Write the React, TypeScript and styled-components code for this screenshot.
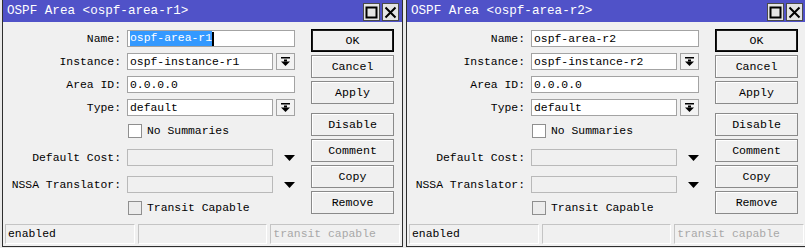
import styled, { createGlobalStyle } from 'styled-components'

const GlobalStyle = createGlobalStyle`
  html, body {
    margin: 0;
    padding: 0;
    background: #e9e9e9;
    overflow: hidden;
  }
  body {
    font-family: "Liberation Mono", "DejaVu Sans Mono", monospace;
  }
`

const Desktop = styled.div`
  display: flex;
  gap: 3px;
  padding-left: 2px;
  width: 820px;
  height: 248px;
`

const Window = styled.div`
  width: 401px;
  height: 247px;
  box-sizing: border-box;
  border: 1px solid #2e2e2e;
  border-top: none;
  background: #f0f0f0;
  display: flex;
  flex-direction: column;
  flex-shrink: 0;
`

const TitleBar = styled.div`
  height: 22px;
  background: #5052c8;
  display: flex;
  align-items: center;
  padding: 0 3px 0 4px;
`

const Title = styled.div`
  flex: 1;
  color: #ffffff;
  font-size: 12.6px;
  white-space: nowrap;
`

const TitleButtons = styled.div`
  display: flex;
  gap: 2px;
  margin-top: 2px;
`

const TitleButton = styled.div`
  width: 17px;
  height: 18px;
  box-sizing: border-box;
  background: #e4e4e4;
  border: 1px solid #4a4a4a;
  display: flex;
  align-items: center;
  justify-content: center;
`

const Main = styled.div`
  display: flex;
  padding-top: 5px;
`

const Form = styled.div`
  width: 308px;
  display: flex;
  flex-direction: column;
`

const Row = styled.div<{ $gap?: number }>`
  display: grid;
  grid-template-columns: 118px 1fr;
  column-gap: 6px;
  align-items: center;
  height: 23px;
  margin-top: ${p => p.$gap || 0}px;
  font-size: 11.4px;
  color: #000;
`

const Label = styled.div`
  text-align: right;
  white-space: nowrap;
`

const FieldLine = styled.div`
  display: flex;
  align-items: center;
  gap: 3px;
`

const Field = styled.div<{ $w: number; $disabled?: boolean }>`
  width: ${p => p.$w}px;
  height: 17px;
  box-sizing: border-box;
  border: 1px solid ${p => (p.$disabled ? '#b9b9b9' : '#a3a3a3')};
  background: ${p => (p.$disabled ? '#f0f0f0' : '#ffffff')};
  display: flex;
  align-items: center;
  padding-left: 2px;
  white-space: nowrap;
  overflow: hidden;
`

const Selected = styled.span`
  background: #3399ff;
  color: #fff;
  line-height: 15px;
`

const Caret = styled.span`
  display: inline-block;
  width: 2px;
  height: 14px;
  background: #000;
`

const DropButton = styled.div`
  width: 19px;
  height: 17px;
  box-sizing: border-box;
  border: 1px solid #a3a3a3;
  background: #f3f3f3;
  display: flex;
  align-items: center;
  justify-content: center;
`

const ArrowSlot = styled.div`
  width: 19px;
  display: flex;
  justify-content: center;
  margin-left: 4px;
`

const CheckLine = styled.div`
  grid-column: 2;
  display: flex;
  align-items: center;
  gap: 5px;
  padding-left: 1px;
`

const CheckBox = styled.div<{ $disabled?: boolean }>`
  width: 14px;
  height: 14px;
  box-sizing: border-box;
  border: 1px solid #8f8f8f;
  background: ${p => (p.$disabled ? '#ececec' : '#ffffff')};
`

const Buttons = styled.div`
  display: flex;
  flex-direction: column;
  gap: 3px;
  padding-top: 2px;
  width: 83px;
`

const Button = styled.div<{ $default?: boolean; $gap?: number }>`
  height: 23px;
  box-sizing: border-box;
  border: 1px solid ${p => (p.$default ? '#000' : '#8a8a8a')};
  box-shadow: ${p => (p.$default ? 'inset 0 0 0 1px #1a1a1a' : 'inset 1px 1px 0 #ffffff')};
  background: #f0f0f0;
  display: flex;
  align-items: center;
  justify-content: center;
  font-size: 11.6px;
  color: #000;
  margin-top: ${p => p.$gap || 0}px;
`

const StatusBar = styled.div`
  display: flex;
  gap: 3px;
  padding: 0 2px;
  margin-top: 5px;
`

const StatusCell = styled.div<{ $muted?: boolean }>`
  flex: 1;
  height: 20px;
  box-sizing: border-box;
  border: 1px solid #c4c4c4;
  border-right-color: #ffffff;
  border-bottom-color: #ffffff;
  display: flex;
  align-items: center;
  padding-left: 2px;
  font-size: 11.4px;
  color: ${p => (p.$muted ? '#a8a8a8' : '#000')};
`

const MaxIcon = () => (
  <svg width="13" height="13" viewBox="0 0 13 13">
    <rect x="1.5" y="1.5" width="10" height="10" fill="none" stroke="#000" strokeWidth="2" />
  </svg>
)

const CloseIcon = () => (
  <svg width="13" height="13" viewBox="0 0 13 13">
    <path d="M1.5 1.5 L11.5 11.5 M11.5 1.5 L1.5 11.5" stroke="#000" strokeWidth="2" />
  </svg>
)

const DropIcon = () => (
  <svg width="9" height="9" viewBox="0 0 9 9">
    <rect x="0" y="0" width="9" height="1.5" fill="#000" />
    <rect x="3" y="2.5" width="3" height="2" fill="#000" />
    <path d="M0 4.5 H9 L4.5 9 Z" fill="#000" />
  </svg>
)

const Triangle = () => (
  <svg width="11" height="6" viewBox="0 0 11 6">
    <path d="M0 0 H11 L5.5 6 Z" fill="#000" />
  </svg>
)

const AreaWindow = (props: { name: string; instance: string; focused?: boolean }) => {
  return (
    <Window>
      <TitleBar>
        <Title>OSPF Area &lt;{props.name}&gt;</Title>
        <TitleButtons>
          <TitleButton>
            <MaxIcon />
          </TitleButton>
          <TitleButton>
            <CloseIcon />
          </TitleButton>
        </TitleButtons>
      </TitleBar>
      <Main>
        <Form>
          <Row>
            <Label>Name:</Label>
            <Field $w={168}>
              {props.focused ? (
                <>
                  <Selected>{props.name}</Selected>
                  <Caret />
                </>
              ) : (
                props.name
              )}
            </Field>
          </Row>
          <Row>
            <Label>Instance:</Label>
            <FieldLine>
              <Field $w={146}>{props.instance}</Field>
              <DropButton>
                <DropIcon />
              </DropButton>
            </FieldLine>
          </Row>
          <Row>
            <Label>Area ID:</Label>
            <Field $w={168}>0.0.0.0</Field>
          </Row>
          <Row>
            <Label>Type:</Label>
            <FieldLine>
              <Field $w={146}>default</Field>
              <DropButton>
                <DropIcon />
              </DropButton>
            </FieldLine>
          </Row>
          <Row>
            <CheckLine>
              <CheckBox />
              No Summaries
            </CheckLine>
          </Row>
          <Row $gap={4}>
            <Label>Default Cost:</Label>
            <FieldLine>
              <Field $w={146} $disabled />
              <ArrowSlot>
                <Triangle />
              </ArrowSlot>
            </FieldLine>
          </Row>
          <Row $gap={4}>
            <Label>NSSA Translator:</Label>
            <FieldLine>
              <Field $w={146} $disabled />
              <ArrowSlot>
                <Triangle />
              </ArrowSlot>
            </FieldLine>
          </Row>
          <Row>
            <CheckLine>
              <CheckBox $disabled />
              Transit Capable
            </CheckLine>
          </Row>
        </Form>
        <Buttons>
          <Button $default>OK</Button>
          <Button>Cancel</Button>
          <Button>Apply</Button>
          <Button $gap={6}>Disable</Button>
          <Button>Comment</Button>
          <Button>Copy</Button>
          <Button>Remove</Button>
        </Buttons>
      </Main>
      <StatusBar>
        <StatusCell>enabled</StatusCell>
        <StatusCell />
        <StatusCell $muted>transit capable</StatusCell>
      </StatusBar>
    </Window>
  )
}

const App = () => {
  return (
    <>
      <GlobalStyle />
      <Desktop>
        <AreaWindow name="ospf-area-r1" instance="ospf-instance-r1" focused />
        <AreaWindow name="ospf-area-r2" instance="ospf-instance-r2" />
      </Desktop>
    </>
  )
}

export default App
